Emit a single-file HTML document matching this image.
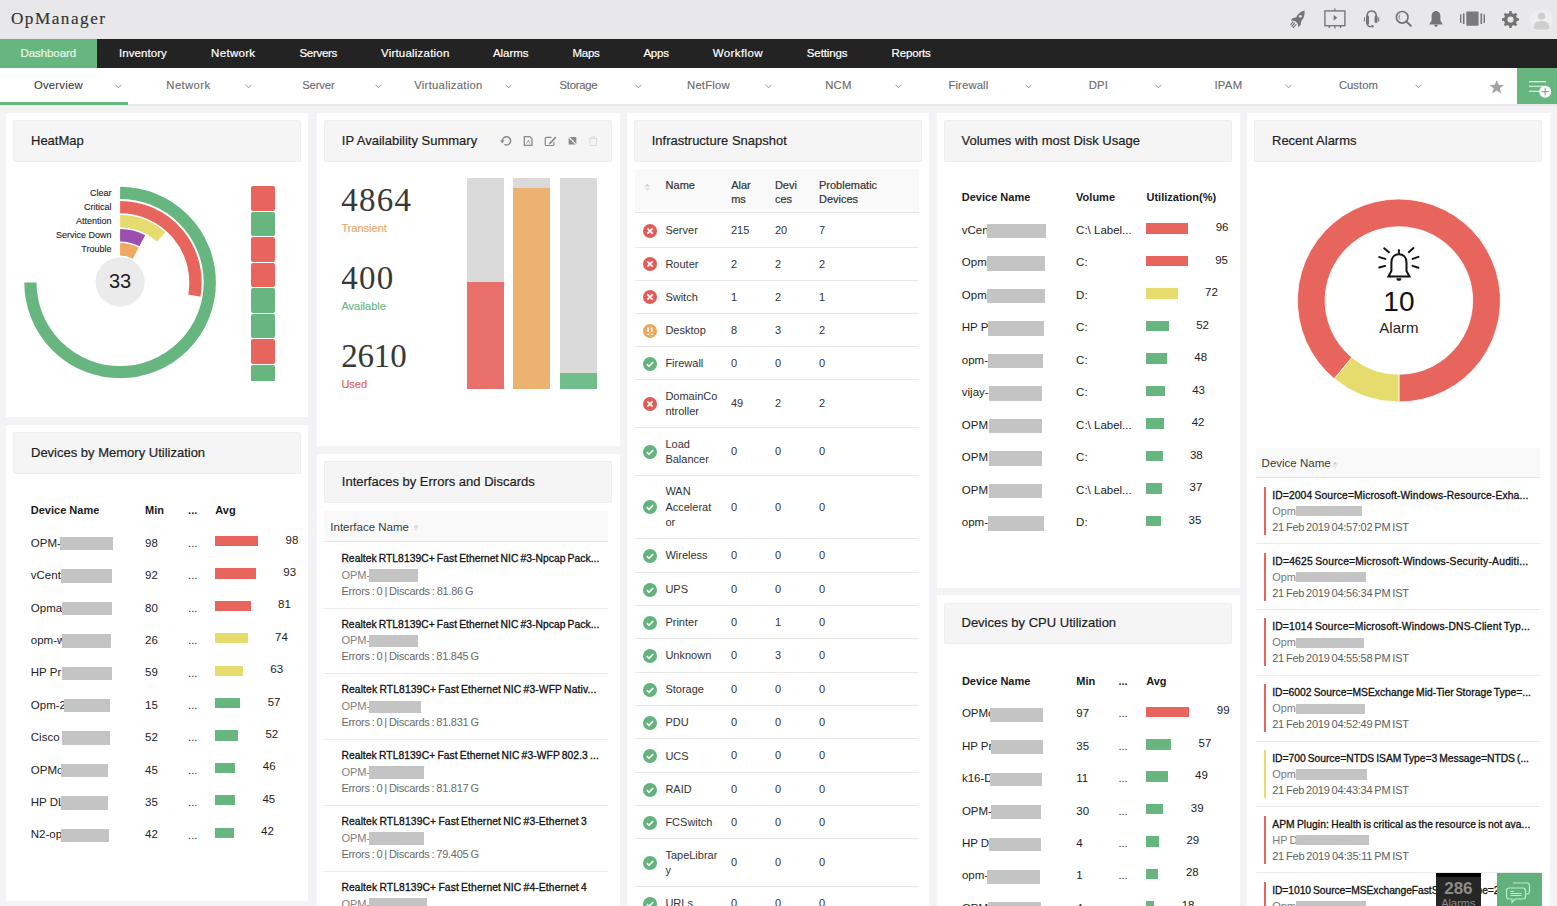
<!DOCTYPE html><html><head><meta charset="utf-8"><style>
html,body{margin:0;padding:0;}
body{width:1557px;height:906px;overflow:hidden;position:relative;background:#f3f3f5;font-family:"Liberation Sans", sans-serif;}
.t{position:absolute;white-space:nowrap;}
.r{position:absolute;}
svg{position:absolute;overflow:visible;}
</style></head><body>
<div class="r" style="left:0.00px;top:0.00px;width:1557.00px;height:39.00px;background:#e8e8ea;"></div>
<div class="t" style="top:7.50px;font-size:17.2px;line-height:22px;color:#333;font-family:'Liberation Serif', serif;-webkit-text-stroke:0.15px #333;left:10.90px;letter-spacing:1.512px;">OpManager</div>
<svg style="left:1286px;top:6px" width="22" height="24" viewBox="0 0 22 24">
<path d="M18.6 4.5 C15 5.2 12 7.8 10.2 11.2 L6.6 12.2 L4.8 14.3 L9 14.9 L11.7 17.6 L12.5 21.2 L14.6 19.1 L15.3 15.1 C17.9 12.8 18.9 9 18.6 4.5 Z" fill="#747474"/>
<circle cx="14.3" cy="10.3" r="1.35" fill="#e8e8ea"/>
<path d="M8.4 17.1 L5.9 20.3 M10 18.5 L7.3 21.6 M7 15.9 L4.8 18.6" stroke="#747474" stroke-width="1.1" stroke-linecap="round"/>
</svg>
<svg style="left:1323px;top:8px" width="24" height="22" viewBox="0 0 24 22">
<rect x="1.9" y="2.9" width="20" height="14.8" fill="none" stroke="#747474" stroke-width="1.35"/>
<path d="M11.9 0.6 V2.6 M11.9 17.7 V20.6 M6.6 17.8 L6 20 M17.2 17.8 L17.8 20" stroke="#747474" stroke-width="1.3"/>
<path d="M10.7 7 L14.3 9.8 L10.7 12.6 Z" fill="#747474"/>
</svg>
<svg style="left:1362px;top:9px" width="20" height="20" viewBox="0 0 20 20">
<path d="M5 13 V7.2 C5 3.6 7.3 1.9 9.7 1.9 C12.1 1.9 14.3 3.6 14.3 7.2 V12" fill="none" stroke="#747474" stroke-width="1.5"/>
<rect x="4" y="6.6" width="3" height="9.2" rx="1.3" fill="#747474"/>
<rect x="12.6" y="6.6" width="2.9" height="7.4" rx="1.3" fill="#747474"/>
<rect x="1.9" y="8.2" width="1.1" height="4.3" rx="0.5" fill="#747474"/>
<rect x="16.2" y="8.2" width="1.1" height="4.3" rx="0.5" fill="#747474"/>
<path d="M5.4 15.3 C5.8 17.4 7.6 17.8 10 17.4" fill="none" stroke="#747474" stroke-width="1.3"/>
<circle cx="10.4" cy="17.2" r="1.2" fill="#747474"/>
</svg>
<svg style="left:1395px;top:10px" width="18" height="18" viewBox="0 0 18 18">
<circle cx="7.2" cy="7.3" r="5.8" fill="none" stroke="#747474" stroke-width="1.7"/>
<path d="M11.4 11.5 L15.8 15.9" stroke="#747474" stroke-width="2" stroke-linecap="round"/>
<path d="M5 4.5 C3.8 5.7 3.8 8.3 5 9.7" fill="none" stroke="#747474" stroke-width="0.9"/>
</svg>
<svg style="left:1428px;top:10px" width="16" height="18" viewBox="0 0 16 18">
<path d="M8 1 C5.2 1 3.6 3.4 3.6 6.4 V10.4 L1.2 14.4 H14.8 L12.4 10.4 V6.4 C12.4 3.4 10.8 1 8 1 Z" fill="#747474"/>
<ellipse cx="8" cy="15.6" rx="1.6" ry="1.2" fill="#747474"/>
</svg>
<svg style="left:1460px;top:11px" width="26" height="16" viewBox="0 0 26 16">
<rect x="6.3" y="0.5" width="12.3" height="14.3" rx="1" fill="#7b7b7f"/>
<rect x="0" y="3.4" width="1.4" height="8.6" fill="#747474"/>
<rect x="2.9" y="2.4" width="1.6" height="10.6" fill="#747474"/>
<rect x="20.5" y="2.4" width="1.6" height="10.6" fill="#747474"/>
<rect x="23.6" y="3.4" width="1.4" height="8.6" fill="#747474"/>
</svg>
<svg style="left:1501.8px;top:10.6px" width="17" height="17" viewBox="0 0 16.4 16.4">
<path d="M6.83 2.05 L7.06 0.08 L9.34 0.08 L9.57 2.05 L10.61 2.38 L11.58 2.88 L13.13 1.65 L14.75 3.27 L13.52 4.82 L14.02 5.79 L14.35 6.83 L16.32 7.06 L16.32 9.34 L14.35 9.57 L14.02 10.61 L13.52 11.58 L14.75 13.13 L13.13 14.75 L11.58 13.52 L10.61 14.02 L9.57 14.35 L9.34 16.32 L7.06 16.32 L6.83 14.35 L5.79 14.02 L4.82 13.52 L3.27 14.75 L1.65 13.13 L2.88 11.58 L2.38 10.61 L2.05 9.57 L0.08 9.34 L0.08 7.06 L2.05 6.83 L2.38 5.79 L2.88 4.82 L1.65 3.27 L3.27 1.65 L4.82 2.88 L5.79 2.38 Z M11.2 8.2 A3 3 0 1 0 5.2 8.2 A3 3 0 1 0 11.2 8.2 Z" fill="#747474" fill-rule="evenodd"/>
</svg>
<svg style="left:1530px;top:7.5px" width="23" height="24" viewBox="0 0 23 24">
<circle cx="11.5" cy="12" r="11.3" fill="#eeeeef"/>
<circle cx="11.6" cy="8.2" r="3.6" fill="#cfcfd0"/>
<path d="M3.6 19.5 C3.8 15 7 13 11.6 13 C16.2 13 19.4 15 19.6 19.5 C19.6 21 17 21.8 11.6 21.8 C6.2 21.8 3.6 21 3.6 19.5 Z" fill="#cfcfd0"/>
</svg>
<div class="r" style="left:0.00px;top:39.00px;width:1557.00px;height:29.00px;background:#232323;"></div>
<div class="r" style="left:0.00px;top:39.00px;width:97.00px;height:29.00px;background:#67b680;"></div>
<div class="t" style="top:46.42px;font-size:11.5px;line-height:14px;color:#e6f6ea;-webkit-text-stroke:0.2px #e6f6ea;left:20.50px;letter-spacing:-0.085px;">Dashboard</div>
<div class="t" style="top:46.42px;font-size:11.5px;line-height:14px;color:#ffffff;-webkit-text-stroke:0.2px #ffffff;left:119.00px;letter-spacing:0.065px;">Inventory</div>
<div class="t" style="top:46.42px;font-size:11.5px;line-height:14px;color:#ffffff;-webkit-text-stroke:0.2px #ffffff;left:211.10px;letter-spacing:0.302px;">Network</div>
<div class="t" style="top:46.42px;font-size:11.5px;line-height:14px;color:#ffffff;-webkit-text-stroke:0.2px #ffffff;left:299.40px;letter-spacing:-0.289px;">Servers</div>
<div class="t" style="top:46.42px;font-size:11.5px;line-height:14px;color:#ffffff;-webkit-text-stroke:0.2px #ffffff;left:381.00px;letter-spacing:0.204px;">Virtualization</div>
<div class="t" style="top:46.42px;font-size:11.5px;line-height:14px;color:#ffffff;-webkit-text-stroke:0.2px #ffffff;left:493.00px;letter-spacing:-0.064px;">Alarms</div>
<div class="t" style="top:46.42px;font-size:11.5px;line-height:14px;color:#ffffff;-webkit-text-stroke:0.2px #ffffff;left:572.50px;letter-spacing:-0.256px;">Maps</div>
<div class="t" style="top:46.42px;font-size:11.5px;line-height:14px;color:#ffffff;-webkit-text-stroke:0.2px #ffffff;left:643.40px;letter-spacing:-0.230px;">Apps</div>
<div class="t" style="top:46.42px;font-size:11.5px;line-height:14px;color:#ffffff;-webkit-text-stroke:0.2px #ffffff;left:712.70px;letter-spacing:0.403px;">Workflow</div>
<div class="t" style="top:46.42px;font-size:11.5px;line-height:14px;color:#ffffff;-webkit-text-stroke:0.2px #ffffff;left:806.80px;letter-spacing:-0.108px;">Settings</div>
<div class="t" style="top:46.42px;font-size:11.5px;line-height:14px;color:#ffffff;-webkit-text-stroke:0.2px #ffffff;left:891.50px;letter-spacing:-0.154px;">Reports</div>
<div class="r" style="left:0.00px;top:68.00px;width:1557.00px;height:36.00px;background:#ffffff;"></div>
<div class="r" style="left:0.00px;top:104.00px;width:1557.00px;height:2.30px;background:#e7e7ea;"></div>
<div class="r" style="left:0.00px;top:102.00px;width:128.00px;height:2.80px;background:#67b680;"></div>
<div class="t" style="top:77.98px;font-size:11.3px;line-height:14px;color:#3d3d3d;-webkit-text-stroke:0.12px #3d3d3d;left:58.40px;transform:translateX(-50%);letter-spacing:0.213px;">Overview</div>
<svg style="left:114.5px;top:84.3px" width="7" height="5" viewBox="0 0 7 5"><path d="M0.5 0.8 L3.5 3.8 L6.5 0.8" fill="none" stroke="#8a8a8a" stroke-width="0.9"/></svg>
<div class="t" style="top:77.98px;font-size:11.3px;line-height:14px;color:#6a6a6a;-webkit-text-stroke:0.12px #6a6a6a;left:188.40px;transform:translateX(-50%);letter-spacing:0.380px;">Network</div>
<svg style="left:244.5px;top:84.3px" width="7" height="5" viewBox="0 0 7 5"><path d="M0.5 0.8 L3.5 3.8 L6.5 0.8" fill="none" stroke="#8a8a8a" stroke-width="0.9"/></svg>
<div class="t" style="top:77.98px;font-size:11.3px;line-height:14px;color:#6a6a6a;-webkit-text-stroke:0.12px #6a6a6a;left:318.40px;transform:translateX(-50%);letter-spacing:-0.147px;">Server</div>
<svg style="left:374.5px;top:84.3px" width="7" height="5" viewBox="0 0 7 5"><path d="M0.5 0.8 L3.5 3.8 L6.5 0.8" fill="none" stroke="#8a8a8a" stroke-width="0.9"/></svg>
<div class="t" style="top:77.98px;font-size:11.3px;line-height:14px;color:#6a6a6a;-webkit-text-stroke:0.12px #6a6a6a;left:448.40px;transform:translateX(-50%);letter-spacing:0.280px;">Virtualization</div>
<svg style="left:504.5px;top:84.3px" width="7" height="5" viewBox="0 0 7 5"><path d="M0.5 0.8 L3.5 3.8 L6.5 0.8" fill="none" stroke="#8a8a8a" stroke-width="0.9"/></svg>
<div class="t" style="top:77.98px;font-size:11.3px;line-height:14px;color:#6a6a6a;-webkit-text-stroke:0.12px #6a6a6a;left:578.40px;transform:translateX(-50%);letter-spacing:-0.240px;">Storage</div>
<svg style="left:634.5px;top:84.3px" width="7" height="5" viewBox="0 0 7 5"><path d="M0.5 0.8 L3.5 3.8 L6.5 0.8" fill="none" stroke="#8a8a8a" stroke-width="0.9"/></svg>
<div class="t" style="top:77.98px;font-size:11.3px;line-height:14px;color:#6a6a6a;-webkit-text-stroke:0.12px #6a6a6a;left:708.40px;transform:translateX(-50%);letter-spacing:0.180px;">NetFlow</div>
<svg style="left:764.5px;top:84.3px" width="7" height="5" viewBox="0 0 7 5"><path d="M0.5 0.8 L3.5 3.8 L6.5 0.8" fill="none" stroke="#8a8a8a" stroke-width="0.9"/></svg>
<div class="t" style="top:77.98px;font-size:11.3px;line-height:14px;color:#6a6a6a;-webkit-text-stroke:0.12px #6a6a6a;left:838.40px;transform:translateX(-50%);letter-spacing:0.189px;">NCM</div>
<svg style="left:894.5px;top:84.3px" width="7" height="5" viewBox="0 0 7 5"><path d="M0.5 0.8 L3.5 3.8 L6.5 0.8" fill="none" stroke="#8a8a8a" stroke-width="0.9"/></svg>
<div class="t" style="top:77.98px;font-size:11.3px;line-height:14px;color:#6a6a6a;-webkit-text-stroke:0.12px #6a6a6a;left:968.40px;transform:translateX(-50%);letter-spacing:0.135px;">Firewall</div>
<svg style="left:1024.5px;top:84.3px" width="7" height="5" viewBox="0 0 7 5"><path d="M0.5 0.8 L3.5 3.8 L6.5 0.8" fill="none" stroke="#8a8a8a" stroke-width="0.9"/></svg>
<div class="t" style="top:77.98px;font-size:11.3px;line-height:14px;color:#6a6a6a;-webkit-text-stroke:0.12px #6a6a6a;left:1098.40px;transform:translateX(-50%);letter-spacing:0.152px;">DPI</div>
<svg style="left:1154.5px;top:84.3px" width="7" height="5" viewBox="0 0 7 5"><path d="M0.5 0.8 L3.5 3.8 L6.5 0.8" fill="none" stroke="#8a8a8a" stroke-width="0.9"/></svg>
<div class="t" style="top:77.98px;font-size:11.3px;line-height:14px;color:#6a6a6a;-webkit-text-stroke:0.12px #6a6a6a;left:1228.40px;transform:translateX(-50%);letter-spacing:0.280px;">IPAM</div>
<svg style="left:1284.5px;top:84.3px" width="7" height="5" viewBox="0 0 7 5"><path d="M0.5 0.8 L3.5 3.8 L6.5 0.8" fill="none" stroke="#8a8a8a" stroke-width="0.9"/></svg>
<div class="t" style="top:77.98px;font-size:11.3px;line-height:14px;color:#6a6a6a;-webkit-text-stroke:0.12px #6a6a6a;left:1358.40px;transform:translateX(-50%);letter-spacing:0.013px;">Custom</div>
<svg style="left:1414.5px;top:84.3px" width="7" height="5" viewBox="0 0 7 5"><path d="M0.5 0.8 L3.5 3.8 L6.5 0.8" fill="none" stroke="#8a8a8a" stroke-width="0.9"/></svg>
<svg style="left:1488.9px;top:78.6px" width="15.5" height="15.5" viewBox="0 0 24 24"><path d="M12 1.5 L15 9 L23 9.3 L16.8 14.4 L19 22.3 L12 17.8 L5 22.3 L7.2 14.4 L1 9.3 L9 9 Z" fill="#a3a3a3"/></svg>
<div class="r" style="left:1517.40px;top:68.00px;width:39.60px;height:35.80px;background:#67b680;"></div>
<svg style="left:1527px;top:76px" width="26" height="24" viewBox="0 0 26 24">
<path d="M2 5.6 H19 M2 10.2 H19 M2 15.2 H12" stroke="#e9f7ee" stroke-width="1.1"/>
<circle cx="18.2" cy="15.7" r="6" fill="#fff"/>
<path d="M18.2 12 V19.4 M14.5 15.7 H21.9" stroke="#6f9f80" stroke-width="1"/>
</svg>
<div class="r" style="left:6.00px;top:112.80px;width:302.30px;height:304.70px;background:#ffffff;"></div>
<div class="r" style="left:13.20px;top:120.00px;width:287.70px;height:41.8px;background:#f5f5f5;border:1px solid #eeeeee;box-sizing:border-box;border-radius:2px;"></div>
<div class="t" style="top:132.70px;font-size:13px;line-height:16px;color:#1e1e1e;-webkit-text-stroke:0.2px #1e1e1e;left:31.00px;">HeatMap</div>
<svg style="left:0;top:0" width="1557" height="906"><path d="M120.10 192.80 A89.7 89.7 0 1 1 30.40 282.50" fill="none" stroke="#67b680" stroke-width="12.2"/><path d="M120.10 207.10 A75.4 75.4 0 0 1 194.35 295.59" fill="none" stroke="#e8655d" stroke-width="12.4"/><path d="M120.10 221.15 A61.35 61.35 0 0 1 161.15 236.91" fill="none" stroke="#e6dc6e" stroke-width="12.5"/><path d="M120.10 235.25 A47.25 47.25 0 0 1 142.28 240.78" fill="none" stroke="#9c4fae" stroke-width="12.5"/><path d="M120.10 249.25 A33.25 33.25 0 0 1 135.71 253.14" fill="none" stroke="#f0a862" stroke-width="12.7"/><circle cx="120.1" cy="281.8" r="24.6" fill="#ebebeb"/></svg>
<div class="t" style="top:269.37px;font-size:20px;line-height:25px;color:#1f1f1f;left:120.10px;transform:translateX(-50%);">33</div>
<div class="t" style="top:188.18px;font-size:9px;line-height:11px;color:#222;-webkit-text-stroke:0.1px #222;right:1445.50px;">Clear</div>
<div class="t" style="top:202.08px;font-size:9px;line-height:11px;color:#222;-webkit-text-stroke:0.1px #222;right:1445.50px;">Critical</div>
<div class="t" style="top:215.98px;font-size:9px;line-height:11px;color:#222;-webkit-text-stroke:0.1px #222;right:1445.50px;">Attention</div>
<div class="t" style="top:229.88px;font-size:9px;line-height:11px;color:#222;-webkit-text-stroke:0.1px #222;right:1445.50px;">Service Down</div>
<div class="t" style="top:243.78px;font-size:9px;line-height:11px;color:#222;-webkit-text-stroke:0.1px #222;right:1445.50px;">Trouble</div>
<div class="r" style="left:250.70px;top:186.40px;width:24.30px;height:24.30px;background:#e8655d;border-radius:2px;"></div>
<div class="r" style="left:250.70px;top:211.90px;width:24.30px;height:24.30px;background:#67b680;border-radius:2px;"></div>
<div class="r" style="left:250.70px;top:237.40px;width:24.30px;height:24.30px;background:#e8655d;border-radius:2px;"></div>
<div class="r" style="left:250.70px;top:262.90px;width:24.30px;height:24.30px;background:#e8655d;border-radius:2px;"></div>
<div class="r" style="left:250.70px;top:288.40px;width:24.30px;height:24.30px;background:#67b680;border-radius:2px;"></div>
<div class="r" style="left:250.70px;top:313.90px;width:24.30px;height:24.30px;background:#67b680;border-radius:2px;"></div>
<div class="r" style="left:250.70px;top:339.40px;width:24.30px;height:24.30px;background:#e8655d;border-radius:2px;"></div>
<div class="r" style="left:250.70px;top:364.90px;width:24.30px;height:16.10px;background:#67b680;border-radius:2px 2px 0 0;"></div>
<div class="r" style="left:6.00px;top:424.70px;width:302.30px;height:476.00px;background:#ffffff;"></div>
<div class="r" style="left:13.20px;top:431.90px;width:287.70px;height:41.8px;background:#f5f5f5;border:1px solid #eeeeee;box-sizing:border-box;border-radius:2px;"></div>
<div class="t" style="top:444.60px;font-size:13px;line-height:16px;color:#1e1e1e;-webkit-text-stroke:0.2px #1e1e1e;left:31.00px;">Devices by Memory Utilization</div>
<div class="t" style="top:503.19px;font-size:11px;line-height:14px;color:#1a1a1a;font-weight:700;left:30.80px;">Device Name</div>
<div class="t" style="top:503.19px;font-size:11px;line-height:14px;color:#1a1a1a;font-weight:700;left:145.10px;">Min</div>
<div class="t" style="top:503.19px;font-size:11px;line-height:14px;color:#1a1a1a;font-weight:700;left:188.10px;">...</div>
<div class="t" style="top:503.19px;font-size:11px;line-height:14px;color:#1a1a1a;font-weight:700;left:215.30px;">Avg</div>
<div class="t" style="top:535.82px;font-size:11.5px;line-height:14px;color:#222;left:30.80px;">OPM-</div>
<div class="r" style="left:59.90px;top:537.00px;width:53.20px;height:13.40px;background:#c4c4c4;"></div>
<div class="t" style="top:535.82px;font-size:11.5px;line-height:14px;color:#222;left:145.10px;">98</div>
<div class="t" style="top:535.99px;font-size:11px;line-height:14px;color:#222;left:188.10px;">...</div>
<div class="r" style="left:215.30px;top:535.90px;width:42.73px;height:10.40px;background:#e8655d;"></div>
<div class="t" style="top:532.62px;font-size:11.5px;line-height:14px;color:#222;left:285.53px;">98</div>
<div class="t" style="top:568.22px;font-size:11.5px;line-height:14px;color:#222;left:30.80px;">vCent</div>
<div class="r" style="left:60.50px;top:569.40px;width:51.90px;height:13.40px;background:#c4c4c4;"></div>
<div class="t" style="top:568.22px;font-size:11.5px;line-height:14px;color:#222;left:145.10px;">92</div>
<div class="t" style="top:568.39px;font-size:11px;line-height:14px;color:#222;left:188.10px;">...</div>
<div class="r" style="left:215.30px;top:568.30px;width:40.55px;height:10.40px;background:#e8655d;"></div>
<div class="t" style="top:565.02px;font-size:11.5px;line-height:14px;color:#222;left:283.35px;">93</div>
<div class="t" style="top:600.62px;font-size:11.5px;line-height:14px;color:#222;left:30.80px;">Opma</div>
<div class="r" style="left:61.90px;top:601.80px;width:50.00px;height:13.40px;background:#c4c4c4;"></div>
<div class="t" style="top:600.62px;font-size:11.5px;line-height:14px;color:#222;left:145.10px;">80</div>
<div class="t" style="top:600.79px;font-size:11px;line-height:14px;color:#222;left:188.10px;">...</div>
<div class="r" style="left:215.30px;top:600.70px;width:35.32px;height:10.40px;background:#e8655d;"></div>
<div class="t" style="top:597.42px;font-size:11.5px;line-height:14px;color:#222;left:278.12px;">81</div>
<div class="t" style="top:633.02px;font-size:11.5px;line-height:14px;color:#222;left:30.80px;">opm-w</div>
<div class="r" style="left:61.90px;top:634.20px;width:49.00px;height:13.40px;background:#c4c4c4;"></div>
<div class="t" style="top:633.02px;font-size:11.5px;line-height:14px;color:#222;left:145.10px;">26</div>
<div class="t" style="top:633.19px;font-size:11px;line-height:14px;color:#222;left:188.10px;">...</div>
<div class="r" style="left:215.30px;top:633.10px;width:32.26px;height:10.40px;background:#e6dc6e;"></div>
<div class="t" style="top:629.82px;font-size:11.5px;line-height:14px;color:#222;left:275.06px;">74</div>
<div class="t" style="top:665.42px;font-size:11.5px;line-height:14px;color:#222;left:30.80px;">HP Pr</div>
<div class="r" style="left:61.90px;top:666.60px;width:50.00px;height:13.40px;background:#c4c4c4;"></div>
<div class="t" style="top:665.42px;font-size:11.5px;line-height:14px;color:#222;left:145.10px;">59</div>
<div class="t" style="top:665.59px;font-size:11px;line-height:14px;color:#222;left:188.10px;">...</div>
<div class="r" style="left:215.30px;top:665.50px;width:27.47px;height:10.40px;background:#e6dc6e;"></div>
<div class="t" style="top:662.22px;font-size:11.5px;line-height:14px;color:#222;left:270.27px;">63</div>
<div class="t" style="top:697.82px;font-size:11.5px;line-height:14px;color:#222;left:30.80px;">Opm-2</div>
<div class="r" style="left:63.90px;top:699.00px;width:46.30px;height:13.40px;background:#c4c4c4;"></div>
<div class="t" style="top:697.82px;font-size:11.5px;line-height:14px;color:#222;left:145.10px;">15</div>
<div class="t" style="top:697.99px;font-size:11px;line-height:14px;color:#222;left:188.10px;">...</div>
<div class="r" style="left:215.30px;top:697.90px;width:24.85px;height:10.40px;background:#67b680;"></div>
<div class="t" style="top:694.62px;font-size:11.5px;line-height:14px;color:#222;left:267.65px;">57</div>
<div class="t" style="top:730.22px;font-size:11.5px;line-height:14px;color:#222;left:30.80px;">Cisco 2</div>
<div class="r" style="left:62.00px;top:731.40px;width:47.50px;height:13.40px;background:#c4c4c4;"></div>
<div class="t" style="top:730.22px;font-size:11.5px;line-height:14px;color:#222;left:145.10px;">52</div>
<div class="t" style="top:730.39px;font-size:11px;line-height:14px;color:#222;left:188.10px;">...</div>
<div class="r" style="left:215.30px;top:730.30px;width:22.67px;height:10.40px;background:#67b680;"></div>
<div class="t" style="top:727.02px;font-size:11.5px;line-height:14px;color:#222;left:265.47px;">52</div>
<div class="t" style="top:762.62px;font-size:11.5px;line-height:14px;color:#222;left:30.80px;">OPMc</div>
<div class="r" style="left:61.40px;top:763.80px;width:46.80px;height:13.40px;background:#c4c4c4;"></div>
<div class="t" style="top:762.62px;font-size:11.5px;line-height:14px;color:#222;left:145.10px;">45</div>
<div class="t" style="top:762.79px;font-size:11px;line-height:14px;color:#222;left:188.10px;">...</div>
<div class="r" style="left:215.30px;top:762.70px;width:20.06px;height:10.40px;background:#67b680;"></div>
<div class="t" style="top:759.42px;font-size:11.5px;line-height:14px;color:#222;left:262.86px;">46</div>
<div class="t" style="top:795.02px;font-size:11.5px;line-height:14px;color:#222;left:30.80px;">HP DL</div>
<div class="r" style="left:61.40px;top:796.20px;width:46.30px;height:13.40px;background:#c4c4c4;"></div>
<div class="t" style="top:795.02px;font-size:11.5px;line-height:14px;color:#222;left:145.10px;">35</div>
<div class="t" style="top:795.19px;font-size:11px;line-height:14px;color:#222;left:188.10px;">...</div>
<div class="r" style="left:215.30px;top:795.10px;width:19.62px;height:10.40px;background:#67b680;"></div>
<div class="t" style="top:791.82px;font-size:11.5px;line-height:14px;color:#222;left:262.42px;">45</div>
<div class="t" style="top:827.42px;font-size:11.5px;line-height:14px;color:#222;left:30.80px;">N2-op</div>
<div class="r" style="left:61.40px;top:828.60px;width:47.60px;height:13.40px;background:#c4c4c4;"></div>
<div class="t" style="top:827.42px;font-size:11.5px;line-height:14px;color:#222;left:145.10px;">42</div>
<div class="t" style="top:827.59px;font-size:11px;line-height:14px;color:#222;left:188.10px;">...</div>
<div class="r" style="left:215.30px;top:827.50px;width:18.31px;height:10.40px;background:#67b680;"></div>
<div class="t" style="top:824.22px;font-size:11.5px;line-height:14px;color:#222;left:261.11px;">42</div>
<div class="r" style="left:316.80px;top:112.80px;width:302.80px;height:333.10px;background:#ffffff;"></div>
<div class="r" style="left:324.00px;top:120.00px;width:288.20px;height:41.8px;background:#f5f5f5;border:1px solid #eeeeee;box-sizing:border-box;border-radius:2px;"></div>
<div class="t" style="top:132.70px;font-size:13px;line-height:16px;color:#1e1e1e;-webkit-text-stroke:0.2px #1e1e1e;left:341.80px;">IP Availability Summary</div>
<svg style="left:499px;top:134.5px" width="100" height="12" viewBox="0 0 100 12">
<path d="M3.4 5.9 A4.1 4.1 0 1 1 5.45 9.35" fill="none" stroke="#8a8a8a" stroke-width="1.5"/>
<path d="M1.1 5.5 L5.6 5.5 L3.3 8.6 Z" fill="#8a8a8a"/>
<path d="M25.3 1.6 H30.8 L33 3.8 V10.3 H25.3 Z" fill="none" stroke="#8a8a8a" stroke-width="1.3"/>
<path d="M27.5 8.5 L29.5 5 L30.8 8.5" fill="none" stroke="#8a8a8a" stroke-width="0.8"/>
<path d="M52.5 2.3 H47.3 C46.5 2.3 46.2 2.6 46.2 3.4 V9.4 C46.2 10.2 46.5 10.5 47.3 10.5 H53.8 C54.6 10.5 54.9 10.2 54.9 9.4 V7" fill="none" stroke="#8a8a8a" stroke-width="1.2"/>
<path d="M50.4 7.8 L56.2 1.6 L57.4 2.8 L51.5 9 L49.8 9.4 Z" fill="#8a8a8a"/>
<path d="M70 2 H77.3 V9.2 Z" fill="#8a8a8a"/>
<path d="M69.6 2.4 V9.6 H76.9 Z" fill="#8a8a8a"/>
<path d="M70.4 2.6 L76.6 8.8" stroke="#f4f4f4" stroke-width="1.1"/>
<path d="M90 3.5 H98.5 M92.5 3.5 V2 H96 V3.5 M91 4 V10.5 H97.5 V4" fill="none" stroke="#dddddd" stroke-width="1.1"/>
</svg>
<div class="t" style="top:180.36px;font-size:33px;line-height:41px;color:#383838;font-family:'Liberation Serif', serif;left:341.20px;letter-spacing:1.250px;">4864</div>
<div class="t" style="top:220.69px;font-size:11px;line-height:14px;color:#eaa96b;-webkit-text-stroke:0.2px #eaa96b;left:341.40px;">Transient</div>
<div class="t" style="top:257.76px;font-size:33px;line-height:41px;color:#383838;font-family:'Liberation Serif', serif;left:341.20px;letter-spacing:1.267px;">400</div>
<div class="t" style="top:298.69px;font-size:11px;line-height:14px;color:#6db889;-webkit-text-stroke:0.2px #6db889;left:341.40px;">Available</div>
<div class="t" style="top:336.26px;font-size:33px;line-height:41px;color:#383838;font-family:'Liberation Serif', serif;left:341.20px;letter-spacing:-0.175px;">2610</div>
<div class="t" style="top:376.79px;font-size:11px;line-height:14px;color:#e2655f;-webkit-text-stroke:0.2px #e2655f;left:341.40px;">Used</div>
<div class="r" style="left:467.30px;top:178.00px;width:36.60px;height:210.70px;background:#dadada;"></div>
<div class="r" style="left:467.30px;top:281.70px;width:36.60px;height:107.00px;background:#e8706b;"></div>
<div class="r" style="left:513.30px;top:178.00px;width:37.00px;height:210.70px;background:#dadada;"></div>
<div class="r" style="left:513.30px;top:187.80px;width:37.00px;height:200.90px;background:#ecb272;"></div>
<div class="r" style="left:559.70px;top:178.00px;width:37.10px;height:210.70px;background:#dadada;"></div>
<div class="r" style="left:559.70px;top:372.80px;width:37.10px;height:15.90px;background:#72bd8c;"></div>
<div class="r" style="left:316.80px;top:453.60px;width:302.80px;height:452.40px;background:#ffffff;"></div>
<div class="r" style="left:324.00px;top:460.80px;width:288.20px;height:41.8px;background:#f5f5f5;border:1px solid #eeeeee;box-sizing:border-box;border-radius:2px;"></div>
<div class="t" style="top:473.50px;font-size:13px;line-height:16px;color:#1e1e1e;-webkit-text-stroke:0.2px #1e1e1e;left:341.80px;">Interfaces by Errors and Discards</div>
<div class="r" style="left:324.40px;top:510.60px;width:284.10px;height:30.40px;background:#f9f9f9;border-bottom:1px solid #e6e6e6;"></div>
<div class="t" style="top:519.52px;font-size:11.5px;line-height:14px;color:#3a3a3a;left:330.30px;">Interface Name</div>
<svg style="left:413px;top:524px" width="6" height="8" viewBox="0 0 6 8"><path d="M0.5 3.5 L3 0.8 L5.5 3.5 Z" fill="#cfcfcf"/><path d="M0.5 4.5 L3 7.2 L5.5 4.5 Z" fill="#e6e6e6"/></svg>
<div class="t" style="top:551.73px;font-size:10.3px;line-height:13px;color:#111;word-spacing:-0.8px;-webkit-text-stroke:0.3px #111;left:341.40px;letter-spacing:0.044px;">Realtek RTL8139C+ Fast Ethernet NIC #3-Npcap Pack...</div>
<div class="t" style="top:567.59px;font-size:11px;line-height:14px;color:#808080;left:341.40px;">OPM-</div>
<div class="r" style="left:368.50px;top:569.00px;width:49.00px;height:12.70px;background:#c4c4c4;"></div>
<div class="t" style="top:583.69px;font-size:11px;line-height:14px;color:#6a6a6a;word-spacing:-0.8px;left:341.40px;letter-spacing:-0.255px;">Errors : 0 | Discards : 81.86 G</div>
<div class="r" style="left:324.40px;top:607.50px;width:284.10px;height:1.00px;background:#e9e9e9;"></div>
<div class="t" style="top:617.53px;font-size:10.3px;line-height:13px;color:#111;word-spacing:-0.8px;-webkit-text-stroke:0.3px #111;left:341.40px;letter-spacing:0.044px;">Realtek RTL8139C+ Fast Ethernet NIC #3-Npcap Pack...</div>
<div class="t" style="top:633.39px;font-size:11px;line-height:14px;color:#808080;left:341.40px;">OPM-</div>
<div class="r" style="left:368.50px;top:634.80px;width:49.70px;height:12.70px;background:#c4c4c4;"></div>
<div class="t" style="top:649.49px;font-size:11px;line-height:14px;color:#6a6a6a;word-spacing:-0.8px;left:341.40px;letter-spacing:-0.266px;">Errors : 0 | Discards : 81.845 G</div>
<div class="r" style="left:324.40px;top:673.30px;width:284.10px;height:1.00px;background:#e9e9e9;"></div>
<div class="t" style="top:683.33px;font-size:10.3px;line-height:13px;color:#111;word-spacing:-0.8px;-webkit-text-stroke:0.3px #111;left:341.40px;letter-spacing:0.129px;">Realtek RTL8139C+ Fast Ethernet NIC #3-WFP Nativ...</div>
<div class="t" style="top:699.19px;font-size:11px;line-height:14px;color:#808080;left:341.40px;">OPM-</div>
<div class="r" style="left:368.50px;top:700.60px;width:52.20px;height:12.70px;background:#c4c4c4;"></div>
<div class="t" style="top:715.29px;font-size:11px;line-height:14px;color:#6a6a6a;word-spacing:-0.8px;left:341.40px;letter-spacing:-0.266px;">Errors : 0 | Discards : 81.831 G</div>
<div class="r" style="left:324.40px;top:739.10px;width:284.10px;height:1.00px;background:#e9e9e9;"></div>
<div class="t" style="top:749.13px;font-size:10.3px;line-height:13px;color:#111;word-spacing:-0.8px;-webkit-text-stroke:0.3px #111;left:341.40px;letter-spacing:0.075px;">Realtek RTL8139C+ Fast Ethernet NIC #3-WFP 802.3 ...</div>
<div class="t" style="top:764.99px;font-size:11px;line-height:14px;color:#808080;left:341.40px;">OPM-</div>
<div class="r" style="left:368.50px;top:766.40px;width:55.20px;height:12.70px;background:#c4c4c4;"></div>
<div class="t" style="top:781.09px;font-size:11px;line-height:14px;color:#6a6a6a;word-spacing:-0.8px;left:341.40px;letter-spacing:-0.266px;">Errors : 0 | Discards : 81.817 G</div>
<div class="r" style="left:324.40px;top:804.90px;width:284.10px;height:1.00px;background:#e9e9e9;"></div>
<div class="t" style="top:814.93px;font-size:10.3px;line-height:13px;color:#111;word-spacing:-0.8px;-webkit-text-stroke:0.3px #111;left:341.40px;letter-spacing:0.130px;">Realtek RTL8139C+ Fast Ethernet NIC #3-Ethernet 3</div>
<div class="t" style="top:830.79px;font-size:11px;line-height:14px;color:#808080;left:341.40px;">OPM-</div>
<div class="r" style="left:368.50px;top:832.20px;width:55.20px;height:12.70px;background:#c4c4c4;"></div>
<div class="t" style="top:846.89px;font-size:11px;line-height:14px;color:#6a6a6a;word-spacing:-0.8px;left:341.40px;letter-spacing:-0.266px;">Errors : 0 | Discards : 79.405 G</div>
<div class="r" style="left:324.40px;top:870.70px;width:284.10px;height:1.00px;background:#e9e9e9;"></div>
<div class="t" style="top:880.73px;font-size:10.3px;line-height:13px;color:#111;word-spacing:-0.8px;-webkit-text-stroke:0.3px #111;left:341.40px;letter-spacing:0.130px;">Realtek RTL8139C+ Fast Ethernet NIC #4-Ethernet 4</div>
<div class="t" style="top:896.59px;font-size:11px;line-height:14px;color:#808080;left:341.40px;">OPM-</div>
<div class="r" style="left:368.50px;top:898.00px;width:58.00px;height:12.70px;background:#c4c4c4;"></div>
<div class="t" style="top:912.69px;font-size:11px;line-height:14px;color:#6a6a6a;word-spacing:-0.8px;left:341.40px;letter-spacing:-0.315px;">Errors : 0 | Discards : 0 G</div>
<div class="r" style="left:626.70px;top:112.80px;width:302.50px;height:793.20px;background:#ffffff;"></div>
<div class="r" style="left:633.90px;top:120.00px;width:287.90px;height:41.8px;background:#f5f5f5;border:1px solid #eeeeee;box-sizing:border-box;border-radius:2px;"></div>
<div class="t" style="top:132.70px;font-size:13px;line-height:16px;color:#1e1e1e;-webkit-text-stroke:0.2px #1e1e1e;left:651.70px;">Infrastructure Snapshot</div>
<div class="r" style="left:635.00px;top:169.40px;width:284.40px;height:44.00px;background:#f9f9f9;border-bottom:1px solid #e4e4e4;box-sizing:border-box;"></div>
<svg style="left:644px;top:183px" width="7" height="9" viewBox="0 0 7 9"><path d="M0.5 3.5 L3.3 0.8 L6.1 3.5 Z" fill="#cfcfcf"/><path d="M0.5 5 L3.3 7.8 L6.1 5 Z" fill="#e3e3e3"/></svg>
<div class="t" style="top:178.19px;font-size:11px;line-height:14px;color:#333;-webkit-text-stroke:0.2px #333;left:665.60px;">Name</div>
<div class="t" style="top:178.19px;font-size:11px;line-height:14px;color:#333;-webkit-text-stroke:0.2px #333;left:731.20px;">Alar</div>
<div class="t" style="top:192.19px;font-size:11px;line-height:14px;color:#333;-webkit-text-stroke:0.2px #333;left:731.20px;">ms</div>
<div class="t" style="top:178.19px;font-size:11px;line-height:14px;color:#333;-webkit-text-stroke:0.2px #333;left:774.90px;">Devi</div>
<div class="t" style="top:192.19px;font-size:11px;line-height:14px;color:#333;-webkit-text-stroke:0.2px #333;left:774.90px;">ces</div>
<div class="t" style="top:178.19px;font-size:11px;line-height:14px;color:#333;-webkit-text-stroke:0.2px #333;left:819.00px;">Problematic</div>
<div class="t" style="top:192.19px;font-size:11px;line-height:14px;color:#333;-webkit-text-stroke:0.2px #333;left:819.00px;">Devices</div>
<div class="t" style="top:223.20px;font-size:11px;line-height:14px;color:#333;left:665.40px;">Server</div>
<div class="t" style="top:223.09px;font-size:11px;line-height:14px;color:#333;left:731.00px;">215</div>
<div class="t" style="top:223.09px;font-size:11px;line-height:14px;color:#333;left:775.00px;">20</div>
<div class="t" style="top:223.09px;font-size:11px;line-height:14px;color:#333;left:819.00px;">7</div>
<svg style="left:643.1px;top:223.90px" width="14" height="14" viewBox="0 0 14 14"><circle cx="7" cy="7" r="7" fill="#e25b57"/><path d="M4.3 4.3 L9.7 9.7 M9.7 4.3 L4.3 9.7" stroke="#fff" stroke-width="1.7"/></svg>
<div class="r" style="left:635.00px;top:246.70px;width:284.40px;height:1.00px;background:#e8e8e8;"></div>
<div class="t" style="top:256.65px;font-size:11px;line-height:14px;color:#333;left:665.40px;">Router</div>
<div class="t" style="top:256.54px;font-size:11px;line-height:14px;color:#333;left:731.00px;">2</div>
<div class="t" style="top:256.54px;font-size:11px;line-height:14px;color:#333;left:775.00px;">2</div>
<div class="t" style="top:256.54px;font-size:11px;line-height:14px;color:#333;left:819.00px;">2</div>
<svg style="left:643.1px;top:257.35px" width="14" height="14" viewBox="0 0 14 14"><circle cx="7" cy="7" r="7" fill="#e25b57"/><path d="M4.3 4.3 L9.7 9.7 M9.7 4.3 L4.3 9.7" stroke="#fff" stroke-width="1.7"/></svg>
<div class="r" style="left:635.00px;top:279.80px;width:284.40px;height:1.00px;background:#e8e8e8;"></div>
<div class="t" style="top:289.75px;font-size:11px;line-height:14px;color:#333;left:665.40px;">Switch</div>
<div class="t" style="top:289.64px;font-size:11px;line-height:14px;color:#333;left:731.00px;">1</div>
<div class="t" style="top:289.64px;font-size:11px;line-height:14px;color:#333;left:775.00px;">2</div>
<div class="t" style="top:289.64px;font-size:11px;line-height:14px;color:#333;left:819.00px;">1</div>
<svg style="left:643.1px;top:290.45px" width="14" height="14" viewBox="0 0 14 14"><circle cx="7" cy="7" r="7" fill="#e25b57"/><path d="M4.3 4.3 L9.7 9.7 M9.7 4.3 L4.3 9.7" stroke="#fff" stroke-width="1.7"/></svg>
<div class="r" style="left:635.00px;top:312.90px;width:284.40px;height:1.00px;background:#e8e8e8;"></div>
<div class="t" style="top:322.85px;font-size:11px;line-height:14px;color:#333;left:665.40px;">Desktop</div>
<div class="t" style="top:322.74px;font-size:11px;line-height:14px;color:#333;left:731.00px;">8</div>
<div class="t" style="top:322.74px;font-size:11px;line-height:14px;color:#333;left:775.00px;">3</div>
<div class="t" style="top:322.74px;font-size:11px;line-height:14px;color:#333;left:819.00px;">2</div>
<svg style="left:643.1px;top:323.55px" width="14" height="14" viewBox="0 0 14 14"><circle cx="7" cy="7" r="7" fill="#eba85f"/><path d="M5.3 3.5 V8 M8.7 3.5 V8" stroke="#fff" stroke-width="1.6"/><circle cx="5.3" cy="10.3" r="0.9" fill="#fff"/><circle cx="8.7" cy="10.3" r="0.9" fill="#fff"/></svg>
<div class="r" style="left:635.00px;top:346.00px;width:284.40px;height:1.00px;background:#e8e8e8;"></div>
<div class="t" style="top:356.00px;font-size:11px;line-height:14px;color:#333;left:665.40px;">Firewall</div>
<div class="t" style="top:355.89px;font-size:11px;line-height:14px;color:#333;left:731.00px;">0</div>
<div class="t" style="top:355.89px;font-size:11px;line-height:14px;color:#333;left:775.00px;">0</div>
<div class="t" style="top:355.89px;font-size:11px;line-height:14px;color:#333;left:819.00px;">0</div>
<svg style="left:643.1px;top:356.70px" width="14" height="14" viewBox="0 0 14 14"><circle cx="7" cy="7" r="7" fill="#62b37c"/><path d="M3.8 7.2 L6 9.4 L10.2 5" fill="none" stroke="#fff" stroke-width="1.7"/></svg>
<div class="r" style="left:635.00px;top:379.20px;width:284.40px;height:1.00px;background:#e8e8e8;"></div>
<div class="t" style="top:388.80px;font-size:11px;line-height:14px;color:#333;left:665.40px;">DomainCo</div>
<div class="t" style="top:404.10px;font-size:11px;line-height:14px;color:#333;left:665.40px;">ntroller</div>
<div class="t" style="top:396.34px;font-size:11px;line-height:14px;color:#333;left:731.00px;">49</div>
<div class="t" style="top:396.34px;font-size:11px;line-height:14px;color:#333;left:775.00px;">2</div>
<div class="t" style="top:396.34px;font-size:11px;line-height:14px;color:#333;left:819.00px;">2</div>
<svg style="left:643.1px;top:397.15px" width="14" height="14" viewBox="0 0 14 14"><circle cx="7" cy="7" r="7" fill="#e25b57"/><path d="M4.3 4.3 L9.7 9.7 M9.7 4.3 L4.3 9.7" stroke="#fff" stroke-width="1.7"/></svg>
<div class="r" style="left:635.00px;top:426.90px;width:284.40px;height:1.00px;background:#e8e8e8;"></div>
<div class="t" style="top:436.75px;font-size:11px;line-height:14px;color:#333;left:665.40px;">Load</div>
<div class="t" style="top:452.05px;font-size:11px;line-height:14px;color:#333;left:665.40px;">Balancer</div>
<div class="t" style="top:444.29px;font-size:11px;line-height:14px;color:#333;left:731.00px;">0</div>
<div class="t" style="top:444.29px;font-size:11px;line-height:14px;color:#333;left:775.00px;">0</div>
<div class="t" style="top:444.29px;font-size:11px;line-height:14px;color:#333;left:819.00px;">0</div>
<svg style="left:643.1px;top:445.10px" width="14" height="14" viewBox="0 0 14 14"><circle cx="7" cy="7" r="7" fill="#62b37c"/><path d="M3.8 7.2 L6 9.4 L10.2 5" fill="none" stroke="#fff" stroke-width="1.7"/></svg>
<div class="r" style="left:635.00px;top:475.10px;width:284.40px;height:1.00px;background:#e8e8e8;"></div>
<div class="t" style="top:484.45px;font-size:11px;line-height:14px;color:#333;left:665.40px;">WAN</div>
<div class="t" style="top:499.75px;font-size:11px;line-height:14px;color:#333;left:665.40px;">Accelerat</div>
<div class="t" style="top:515.05px;font-size:11px;line-height:14px;color:#333;left:665.40px;">or</div>
<div class="t" style="top:499.64px;font-size:11px;line-height:14px;color:#333;left:731.00px;">0</div>
<div class="t" style="top:499.64px;font-size:11px;line-height:14px;color:#333;left:775.00px;">0</div>
<div class="t" style="top:499.64px;font-size:11px;line-height:14px;color:#333;left:819.00px;">0</div>
<svg style="left:643.1px;top:500.45px" width="14" height="14" viewBox="0 0 14 14"><circle cx="7" cy="7" r="7" fill="#62b37c"/><path d="M3.8 7.2 L6 9.4 L10.2 5" fill="none" stroke="#fff" stroke-width="1.7"/></svg>
<div class="r" style="left:635.00px;top:537.60px;width:284.40px;height:1.00px;background:#e8e8e8;"></div>
<div class="t" style="top:548.20px;font-size:11px;line-height:14px;color:#333;left:665.40px;">Wireless</div>
<div class="t" style="top:548.09px;font-size:11px;line-height:14px;color:#333;left:731.00px;">0</div>
<div class="t" style="top:548.09px;font-size:11px;line-height:14px;color:#333;left:775.00px;">0</div>
<div class="t" style="top:548.09px;font-size:11px;line-height:14px;color:#333;left:819.00px;">0</div>
<svg style="left:643.1px;top:548.90px" width="14" height="14" viewBox="0 0 14 14"><circle cx="7" cy="7" r="7" fill="#62b37c"/><path d="M3.8 7.2 L6 9.4 L10.2 5" fill="none" stroke="#fff" stroke-width="1.7"/></svg>
<div class="r" style="left:635.00px;top:572.00px;width:284.40px;height:1.00px;background:#e8e8e8;"></div>
<div class="t" style="top:581.90px;font-size:11px;line-height:14px;color:#333;left:665.40px;">UPS</div>
<div class="t" style="top:581.79px;font-size:11px;line-height:14px;color:#333;left:731.00px;">0</div>
<div class="t" style="top:581.79px;font-size:11px;line-height:14px;color:#333;left:775.00px;">0</div>
<div class="t" style="top:581.79px;font-size:11px;line-height:14px;color:#333;left:819.00px;">0</div>
<svg style="left:643.1px;top:582.60px" width="14" height="14" viewBox="0 0 14 14"><circle cx="7" cy="7" r="7" fill="#62b37c"/><path d="M3.8 7.2 L6 9.4 L10.2 5" fill="none" stroke="#fff" stroke-width="1.7"/></svg>
<div class="r" style="left:635.00px;top:605.00px;width:284.40px;height:1.00px;background:#e8e8e8;"></div>
<div class="t" style="top:615.00px;font-size:11px;line-height:14px;color:#333;left:665.40px;">Printer</div>
<div class="t" style="top:614.89px;font-size:11px;line-height:14px;color:#333;left:731.00px;">0</div>
<div class="t" style="top:614.89px;font-size:11px;line-height:14px;color:#333;left:775.00px;">1</div>
<div class="t" style="top:614.89px;font-size:11px;line-height:14px;color:#333;left:819.00px;">0</div>
<svg style="left:643.1px;top:615.70px" width="14" height="14" viewBox="0 0 14 14"><circle cx="7" cy="7" r="7" fill="#62b37c"/><path d="M3.8 7.2 L6 9.4 L10.2 5" fill="none" stroke="#fff" stroke-width="1.7"/></svg>
<div class="r" style="left:635.00px;top:638.20px;width:284.40px;height:1.00px;background:#e8e8e8;"></div>
<div class="t" style="top:648.40px;font-size:11px;line-height:14px;color:#333;left:665.40px;">Unknown</div>
<div class="t" style="top:648.29px;font-size:11px;line-height:14px;color:#333;left:731.00px;">0</div>
<div class="t" style="top:648.29px;font-size:11px;line-height:14px;color:#333;left:775.00px;">3</div>
<div class="t" style="top:648.29px;font-size:11px;line-height:14px;color:#333;left:819.00px;">0</div>
<svg style="left:643.1px;top:649.10px" width="14" height="14" viewBox="0 0 14 14"><circle cx="7" cy="7" r="7" fill="#62b37c"/><path d="M3.8 7.2 L6 9.4 L10.2 5" fill="none" stroke="#fff" stroke-width="1.7"/></svg>
<div class="r" style="left:635.00px;top:671.80px;width:284.40px;height:1.00px;background:#e8e8e8;"></div>
<div class="t" style="top:681.85px;font-size:11px;line-height:14px;color:#333;left:665.40px;">Storage</div>
<div class="t" style="top:681.74px;font-size:11px;line-height:14px;color:#333;left:731.00px;">0</div>
<div class="t" style="top:681.74px;font-size:11px;line-height:14px;color:#333;left:775.00px;">0</div>
<div class="t" style="top:681.74px;font-size:11px;line-height:14px;color:#333;left:819.00px;">0</div>
<svg style="left:643.1px;top:682.55px" width="14" height="14" viewBox="0 0 14 14"><circle cx="7" cy="7" r="7" fill="#62b37c"/><path d="M3.8 7.2 L6 9.4 L10.2 5" fill="none" stroke="#fff" stroke-width="1.7"/></svg>
<div class="r" style="left:635.00px;top:705.10px;width:284.40px;height:1.00px;background:#e8e8e8;"></div>
<div class="t" style="top:715.10px;font-size:11px;line-height:14px;color:#333;left:665.40px;">PDU</div>
<div class="t" style="top:714.99px;font-size:11px;line-height:14px;color:#333;left:731.00px;">0</div>
<div class="t" style="top:714.99px;font-size:11px;line-height:14px;color:#333;left:775.00px;">0</div>
<div class="t" style="top:714.99px;font-size:11px;line-height:14px;color:#333;left:819.00px;">0</div>
<svg style="left:643.1px;top:715.80px" width="14" height="14" viewBox="0 0 14 14"><circle cx="7" cy="7" r="7" fill="#62b37c"/><path d="M3.8 7.2 L6 9.4 L10.2 5" fill="none" stroke="#fff" stroke-width="1.7"/></svg>
<div class="r" style="left:635.00px;top:738.30px;width:284.40px;height:1.00px;background:#e8e8e8;"></div>
<div class="t" style="top:748.55px;font-size:11px;line-height:14px;color:#333;left:665.40px;">UCS</div>
<div class="t" style="top:748.44px;font-size:11px;line-height:14px;color:#333;left:731.00px;">0</div>
<div class="t" style="top:748.44px;font-size:11px;line-height:14px;color:#333;left:775.00px;">0</div>
<div class="t" style="top:748.44px;font-size:11px;line-height:14px;color:#333;left:819.00px;">0</div>
<svg style="left:643.1px;top:749.25px" width="14" height="14" viewBox="0 0 14 14"><circle cx="7" cy="7" r="7" fill="#62b37c"/><path d="M3.8 7.2 L6 9.4 L10.2 5" fill="none" stroke="#fff" stroke-width="1.7"/></svg>
<div class="r" style="left:635.00px;top:772.00px;width:284.40px;height:1.00px;background:#e8e8e8;"></div>
<div class="t" style="top:781.80px;font-size:11px;line-height:14px;color:#333;left:665.40px;">RAID</div>
<div class="t" style="top:781.69px;font-size:11px;line-height:14px;color:#333;left:731.00px;">0</div>
<div class="t" style="top:781.69px;font-size:11px;line-height:14px;color:#333;left:775.00px;">0</div>
<div class="t" style="top:781.69px;font-size:11px;line-height:14px;color:#333;left:819.00px;">0</div>
<svg style="left:643.1px;top:782.50px" width="14" height="14" viewBox="0 0 14 14"><circle cx="7" cy="7" r="7" fill="#62b37c"/><path d="M3.8 7.2 L6 9.4 L10.2 5" fill="none" stroke="#fff" stroke-width="1.7"/></svg>
<div class="r" style="left:635.00px;top:804.80px;width:284.40px;height:1.00px;background:#e8e8e8;"></div>
<div class="t" style="top:814.85px;font-size:11px;line-height:14px;color:#333;left:665.40px;">FCSwitch</div>
<div class="t" style="top:814.74px;font-size:11px;line-height:14px;color:#333;left:731.00px;">0</div>
<div class="t" style="top:814.74px;font-size:11px;line-height:14px;color:#333;left:775.00px;">0</div>
<div class="t" style="top:814.74px;font-size:11px;line-height:14px;color:#333;left:819.00px;">0</div>
<svg style="left:643.1px;top:815.55px" width="14" height="14" viewBox="0 0 14 14"><circle cx="7" cy="7" r="7" fill="#62b37c"/><path d="M3.8 7.2 L6 9.4 L10.2 5" fill="none" stroke="#fff" stroke-width="1.7"/></svg>
<div class="r" style="left:635.00px;top:838.10px;width:284.40px;height:1.00px;background:#e8e8e8;"></div>
<div class="t" style="top:847.90px;font-size:11px;line-height:14px;color:#333;left:665.40px;">TapeLibrar</div>
<div class="t" style="top:863.20px;font-size:11px;line-height:14px;color:#333;left:665.40px;">y</div>
<div class="t" style="top:855.44px;font-size:11px;line-height:14px;color:#333;left:731.00px;">0</div>
<div class="t" style="top:855.44px;font-size:11px;line-height:14px;color:#333;left:775.00px;">0</div>
<div class="t" style="top:855.44px;font-size:11px;line-height:14px;color:#333;left:819.00px;">0</div>
<svg style="left:643.1px;top:856.25px" width="14" height="14" viewBox="0 0 14 14"><circle cx="7" cy="7" r="7" fill="#62b37c"/><path d="M3.8 7.2 L6 9.4 L10.2 5" fill="none" stroke="#fff" stroke-width="1.7"/></svg>
<div class="r" style="left:635.00px;top:886.20px;width:284.40px;height:1.00px;background:#e8e8e8;"></div>
<div class="t" style="top:896.25px;font-size:11px;line-height:14px;color:#333;left:665.40px;">URLs</div>
<div class="t" style="top:896.14px;font-size:11px;line-height:14px;color:#333;left:731.00px;">0</div>
<div class="t" style="top:896.14px;font-size:11px;line-height:14px;color:#333;left:775.00px;">0</div>
<div class="t" style="top:896.14px;font-size:11px;line-height:14px;color:#333;left:819.00px;">0</div>
<svg style="left:643.1px;top:896.95px" width="14" height="14" viewBox="0 0 14 14"><circle cx="7" cy="7" r="7" fill="#62b37c"/><path d="M3.8 7.2 L6 9.4 L10.2 5" fill="none" stroke="#fff" stroke-width="1.7"/></svg>
<div class="r" style="left:936.50px;top:112.80px;width:303.10px;height:474.80px;background:#ffffff;"></div>
<div class="r" style="left:943.70px;top:120.00px;width:288.50px;height:41.8px;background:#f5f5f5;border:1px solid #eeeeee;box-sizing:border-box;border-radius:2px;"></div>
<div class="t" style="top:132.70px;font-size:13px;line-height:16px;color:#1e1e1e;-webkit-text-stroke:0.2px #1e1e1e;left:961.50px;">Volumes with most Disk Usage</div>
<div class="t" style="top:190.49px;font-size:11px;line-height:14px;color:#1a1a1a;font-weight:700;left:961.80px;">Device Name</div>
<div class="t" style="top:190.49px;font-size:11px;line-height:14px;color:#1a1a1a;font-weight:700;left:1076.10px;">Volume</div>
<div class="t" style="top:190.49px;font-size:11px;line-height:14px;color:#1a1a1a;font-weight:700;left:1146.50px;">Utilization(%)</div>
<div class="t" style="top:222.62px;font-size:11.5px;line-height:14px;color:#222;left:961.80px;">vCen</div>
<div class="r" style="left:987.30px;top:223.90px;width:58.50px;height:14.30px;background:#c4c4c4;"></div>
<div class="t" style="top:222.62px;font-size:11.5px;line-height:14px;color:#222;left:1076.10px;">C:\ Label...</div>
<div class="r" style="left:1145.80px;top:223.10px;width:42.53px;height:10.50px;background:#e8655d;"></div>
<div class="t" style="top:220.12px;font-size:11.5px;line-height:14px;color:#222;left:1215.63px;">96</div>
<div class="t" style="top:255.12px;font-size:11.5px;line-height:14px;color:#222;left:961.80px;">Opm</div>
<div class="r" style="left:987.30px;top:256.40px;width:57.70px;height:14.30px;background:#c4c4c4;"></div>
<div class="t" style="top:255.12px;font-size:11.5px;line-height:14px;color:#222;left:1076.10px;">C:</div>
<div class="r" style="left:1145.80px;top:255.60px;width:42.09px;height:10.50px;background:#e8655d;"></div>
<div class="t" style="top:252.62px;font-size:11.5px;line-height:14px;color:#222;left:1215.18px;">95</div>
<div class="t" style="top:287.62px;font-size:11.5px;line-height:14px;color:#222;left:961.80px;">Opm</div>
<div class="r" style="left:987.30px;top:288.90px;width:57.70px;height:14.30px;background:#c4c4c4;"></div>
<div class="t" style="top:287.62px;font-size:11.5px;line-height:14px;color:#222;left:1076.10px;">D:</div>
<div class="r" style="left:1145.80px;top:288.10px;width:31.90px;height:10.50px;background:#e6dc6e;"></div>
<div class="t" style="top:285.12px;font-size:11.5px;line-height:14px;color:#222;left:1205.00px;">72</div>
<div class="t" style="top:320.12px;font-size:11.5px;line-height:14px;color:#222;left:961.80px;">HP P</div>
<div class="r" style="left:988.00px;top:321.40px;width:55.80px;height:14.30px;background:#c4c4c4;"></div>
<div class="t" style="top:320.12px;font-size:11.5px;line-height:14px;color:#222;left:1076.10px;">C:</div>
<div class="r" style="left:1145.80px;top:320.60px;width:23.04px;height:10.50px;background:#67b680;"></div>
<div class="t" style="top:317.62px;font-size:11.5px;line-height:14px;color:#222;left:1196.14px;">52</div>
<div class="t" style="top:352.62px;font-size:11.5px;line-height:14px;color:#222;left:961.80px;">opm-</div>
<div class="r" style="left:988.00px;top:353.90px;width:54.90px;height:14.30px;background:#c4c4c4;"></div>
<div class="t" style="top:352.62px;font-size:11.5px;line-height:14px;color:#222;left:1076.10px;">C:</div>
<div class="r" style="left:1145.80px;top:353.10px;width:21.26px;height:10.50px;background:#67b680;"></div>
<div class="t" style="top:350.12px;font-size:11.5px;line-height:14px;color:#222;left:1194.36px;">48</div>
<div class="t" style="top:385.12px;font-size:11.5px;line-height:14px;color:#222;left:961.80px;">vijay-</div>
<div class="r" style="left:988.70px;top:386.40px;width:53.20px;height:14.30px;background:#c4c4c4;"></div>
<div class="t" style="top:385.12px;font-size:11.5px;line-height:14px;color:#222;left:1076.10px;">C:</div>
<div class="r" style="left:1145.80px;top:385.60px;width:19.05px;height:10.50px;background:#67b680;"></div>
<div class="t" style="top:382.62px;font-size:11.5px;line-height:14px;color:#222;left:1192.15px;">43</div>
<div class="t" style="top:417.62px;font-size:11.5px;line-height:14px;color:#222;left:961.80px;">OPM</div>
<div class="r" style="left:988.50px;top:418.90px;width:53.50px;height:14.30px;background:#c4c4c4;"></div>
<div class="t" style="top:417.62px;font-size:11.5px;line-height:14px;color:#222;left:1076.10px;">C:\ Label...</div>
<div class="r" style="left:1145.80px;top:418.10px;width:18.61px;height:10.50px;background:#67b680;"></div>
<div class="t" style="top:415.12px;font-size:11.5px;line-height:14px;color:#222;left:1191.71px;">42</div>
<div class="t" style="top:450.12px;font-size:11.5px;line-height:14px;color:#222;left:961.80px;">OPM</div>
<div class="r" style="left:988.50px;top:451.40px;width:53.80px;height:14.30px;background:#c4c4c4;"></div>
<div class="t" style="top:450.12px;font-size:11.5px;line-height:14px;color:#222;left:1076.10px;">C:</div>
<div class="r" style="left:1145.80px;top:450.60px;width:16.83px;height:10.50px;background:#67b680;"></div>
<div class="t" style="top:447.62px;font-size:11.5px;line-height:14px;color:#222;left:1189.93px;">38</div>
<div class="t" style="top:482.62px;font-size:11.5px;line-height:14px;color:#222;left:961.80px;">OPM</div>
<div class="r" style="left:988.50px;top:483.90px;width:53.80px;height:14.30px;background:#c4c4c4;"></div>
<div class="t" style="top:482.62px;font-size:11.5px;line-height:14px;color:#222;left:1076.10px;">C:\ Label...</div>
<div class="r" style="left:1145.80px;top:483.10px;width:16.39px;height:10.50px;background:#67b680;"></div>
<div class="t" style="top:480.12px;font-size:11.5px;line-height:14px;color:#222;left:1189.49px;">37</div>
<div class="t" style="top:515.12px;font-size:11.5px;line-height:14px;color:#222;left:961.80px;">opm-</div>
<div class="r" style="left:987.50px;top:516.40px;width:56.30px;height:14.30px;background:#c4c4c4;"></div>
<div class="t" style="top:515.12px;font-size:11.5px;line-height:14px;color:#222;left:1076.10px;">D:</div>
<div class="r" style="left:1145.80px;top:515.60px;width:15.51px;height:10.50px;background:#67b680;"></div>
<div class="t" style="top:512.62px;font-size:11.5px;line-height:14px;color:#222;left:1188.61px;">35</div>
<div class="r" style="left:936.50px;top:595.30px;width:303.10px;height:310.70px;background:#ffffff;"></div>
<div class="r" style="left:943.70px;top:602.50px;width:288.50px;height:41.8px;background:#f5f5f5;border:1px solid #eeeeee;box-sizing:border-box;border-radius:2px;"></div>
<div class="t" style="top:615.20px;font-size:13px;line-height:16px;color:#1e1e1e;-webkit-text-stroke:0.2px #1e1e1e;left:961.50px;">Devices by CPU Utilization</div>
<div class="t" style="top:673.99px;font-size:11px;line-height:14px;color:#1a1a1a;font-weight:700;left:961.90px;">Device Name</div>
<div class="t" style="top:673.99px;font-size:11px;line-height:14px;color:#1a1a1a;font-weight:700;left:1076.30px;">Min</div>
<div class="t" style="top:673.99px;font-size:11px;line-height:14px;color:#1a1a1a;font-weight:700;left:1118.50px;">...</div>
<div class="t" style="top:673.99px;font-size:11px;line-height:14px;color:#1a1a1a;font-weight:700;left:1146.20px;">Avg</div>
<div class="t" style="top:706.32px;font-size:11.5px;line-height:14px;color:#222;left:961.90px;">OPMc</div>
<div class="r" style="left:989.90px;top:708.00px;width:53.10px;height:13.50px;background:#c4c4c4;"></div>
<div class="t" style="top:706.32px;font-size:11.5px;line-height:14px;color:#222;left:1076.30px;">97</div>
<div class="t" style="top:706.49px;font-size:11px;line-height:14px;color:#222;left:1118.50px;">...</div>
<div class="r" style="left:1146.20px;top:706.50px;width:43.07px;height:10.80px;background:#e8655d;"></div>
<div class="t" style="top:703.42px;font-size:11.5px;line-height:14px;color:#222;left:1216.87px;">99</div>
<div class="t" style="top:738.72px;font-size:11.5px;line-height:14px;color:#222;left:961.90px;">HP Pr</div>
<div class="r" style="left:990.70px;top:740.40px;width:52.30px;height:13.50px;background:#c4c4c4;"></div>
<div class="t" style="top:738.72px;font-size:11.5px;line-height:14px;color:#222;left:1076.30px;">35</div>
<div class="t" style="top:738.89px;font-size:11px;line-height:14px;color:#222;left:1118.50px;">...</div>
<div class="r" style="left:1146.20px;top:738.90px;width:24.80px;height:10.80px;background:#67b680;"></div>
<div class="t" style="top:735.82px;font-size:11.5px;line-height:14px;color:#222;left:1198.60px;">57</div>
<div class="t" style="top:771.12px;font-size:11.5px;line-height:14px;color:#222;left:961.90px;">k16-D</div>
<div class="r" style="left:990.10px;top:772.80px;width:51.50px;height:13.50px;background:#c4c4c4;"></div>
<div class="t" style="top:771.12px;font-size:11.5px;line-height:14px;color:#222;left:1076.30px;">11</div>
<div class="t" style="top:771.29px;font-size:11px;line-height:14px;color:#222;left:1118.50px;">...</div>
<div class="r" style="left:1146.20px;top:771.30px;width:21.32px;height:10.80px;background:#67b680;"></div>
<div class="t" style="top:768.22px;font-size:11.5px;line-height:14px;color:#222;left:1195.12px;">49</div>
<div class="t" style="top:803.52px;font-size:11.5px;line-height:14px;color:#222;left:961.90px;">OPM-</div>
<div class="r" style="left:990.70px;top:805.20px;width:50.30px;height:13.50px;background:#c4c4c4;"></div>
<div class="t" style="top:803.52px;font-size:11.5px;line-height:14px;color:#222;left:1076.30px;">30</div>
<div class="t" style="top:803.69px;font-size:11px;line-height:14px;color:#222;left:1118.50px;">...</div>
<div class="r" style="left:1146.20px;top:803.70px;width:16.96px;height:10.80px;background:#67b680;"></div>
<div class="t" style="top:800.62px;font-size:11.5px;line-height:14px;color:#222;left:1190.76px;">39</div>
<div class="t" style="top:835.92px;font-size:11.5px;line-height:14px;color:#222;left:961.90px;">HP D</div>
<div class="r" style="left:988.70px;top:837.60px;width:52.30px;height:13.50px;background:#c4c4c4;"></div>
<div class="t" style="top:835.92px;font-size:11.5px;line-height:14px;color:#222;left:1076.30px;">4</div>
<div class="t" style="top:836.09px;font-size:11px;line-height:14px;color:#222;left:1118.50px;">...</div>
<div class="r" style="left:1146.20px;top:836.10px;width:12.62px;height:10.80px;background:#67b680;"></div>
<div class="t" style="top:833.02px;font-size:11.5px;line-height:14px;color:#222;left:1186.41px;">29</div>
<div class="t" style="top:868.32px;font-size:11.5px;line-height:14px;color:#222;left:961.90px;">opm-</div>
<div class="r" style="left:987.30px;top:870.00px;width:52.90px;height:13.50px;background:#c4c4c4;"></div>
<div class="t" style="top:868.32px;font-size:11.5px;line-height:14px;color:#222;left:1076.30px;">1</div>
<div class="t" style="top:868.49px;font-size:11px;line-height:14px;color:#222;left:1118.50px;">...</div>
<div class="r" style="left:1146.20px;top:868.50px;width:12.18px;height:10.80px;background:#67b680;"></div>
<div class="t" style="top:865.42px;font-size:11.5px;line-height:14px;color:#222;left:1185.98px;">28</div>
<div class="t" style="top:900.72px;font-size:11.5px;line-height:14px;color:#222;left:961.90px;">OPM</div>
<div class="r" style="left:988.00px;top:902.40px;width:53.00px;height:13.50px;background:#c4c4c4;"></div>
<div class="t" style="top:900.72px;font-size:11.5px;line-height:14px;color:#222;left:1076.30px;">4</div>
<div class="t" style="top:900.89px;font-size:11px;line-height:14px;color:#222;left:1118.50px;">...</div>
<div class="r" style="left:1146.20px;top:900.90px;width:7.83px;height:10.80px;background:#67b680;"></div>
<div class="t" style="top:897.82px;font-size:11.5px;line-height:14px;color:#222;left:1181.63px;">18</div>
<div class="r" style="left:1247.00px;top:112.80px;width:302.80px;height:793.20px;background:#ffffff;"></div>
<div class="r" style="left:1254.20px;top:120.00px;width:288.20px;height:41.8px;background:#f5f5f5;border:1px solid #eeeeee;box-sizing:border-box;border-radius:2px;"></div>
<div class="t" style="top:132.70px;font-size:13px;line-height:16px;color:#1e1e1e;-webkit-text-stroke:0.2px #1e1e1e;left:1272.00px;">Recent Alarms</div>
<svg style="left:0;top:0" width="1557" height="906"><path d="M1334.34 378.82 A101.5 101.5 0 1 1 1398.90 402.00 L1398.90 374.30 A73.8 73.8 0 1 0 1351.96 357.45 Z" fill="#e8655d" stroke="#fff" stroke-width="0.8"/><path d="M1398.90 402.00 A101.5 101.5 0 0 1 1334.34 378.82 L1351.96 357.45 A73.8 73.8 0 0 0 1398.90 374.30 Z" fill="#e6dc6e" stroke="#fff" stroke-width="0.8"/></svg>
<svg style="left:1370px;top:240px" width="60" height="50" viewBox="0 0 60 50">
<path d="M28.9 9.3 V13.8" stroke="#111" stroke-width="2"/>
<path d="M21.4 30.9 V22.5 C21.4 17.2 24.6 14.3 28.9 14.3 C33.2 14.3 36.5 17.2 36.5 22.5 V30.9 L39.5 36.6 H18.4 Z" fill="none" stroke="#111" stroke-width="2" stroke-linejoin="miter"/>
<path d="M26.4 38.2 A2.5 2.6 0 0 0 31.4 38.2 Z" fill="#111"/>
<path d="M14.2 8.3 L18.9 12.2 M9.3 17.1 L15.3 18.9 M9.3 27.5 L15.1 25.9 M43.4 8.1 L38.8 12.2 M48.4 16.9 L42.6 18.9 M48.4 27.7 L42.6 25.9" stroke="#111" stroke-width="2" stroke-linecap="round"/>
</svg>
<div class="t" style="top:283.50px;font-size:28px;line-height:35px;color:#111;left:1398.90px;transform:translateX(-50%);">10</div>
<div class="t" style="top:317.50px;font-size:15px;line-height:19px;color:#222;left:1398.90px;transform:translateX(-50%);">Alarm</div>
<div class="r" style="left:1256.30px;top:448.00px;width:283.50px;height:29.90px;background:#f9f9f9;border-bottom:1px solid #e4e4e4;box-sizing:border-box;"></div>
<div class="t" style="top:456.02px;font-size:11.5px;line-height:14px;color:#3a3a3a;left:1261.60px;">Device Name</div>
<svg style="left:1332px;top:460.5px" width="6" height="8" viewBox="0 0 6 8"><path d="M0.5 3.5 L3 0.8 L5.5 3.5 Z" fill="#cfcfcf"/><path d="M0.5 4.5 L3 7.2 L5.5 4.5 Z" fill="#e6e6e6"/></svg>
<div class="r" style="left:1264.20px;top:486.70px;width:2.00px;height:48.00px;background:#e8655d;"></div>
<div class="t" style="top:488.73px;font-size:10.3px;line-height:13px;color:#111;word-spacing:-0.8px;-webkit-text-stroke:0.3px #111;left:1272.20px;letter-spacing:0.129px;">ID=2004 Source=Microsoft-Windows-Resource-Exha...</div>
<div class="t" style="top:503.79px;font-size:11px;line-height:14px;color:#7a7a7a;word-spacing:-0.8px;left:1272.20px;">Opm</div>
<div class="r" style="left:1295.50px;top:506.20px;width:66.20px;height:10.30px;background:#c4c4c4;"></div>
<div class="t" style="top:519.79px;font-size:11px;line-height:14px;color:#5e5e5e;word-spacing:-0.8px;left:1272.20px;letter-spacing:-0.255px;">21 Feb 2019 04:57:02 PM IST</div>
<div class="r" style="left:1256.30px;top:543.20px;width:283.50px;height:1.00px;background:#e9e9e9;"></div>
<div class="r" style="left:1264.20px;top:552.50px;width:2.00px;height:48.00px;background:#e8655d;"></div>
<div class="t" style="top:554.53px;font-size:10.3px;line-height:13px;color:#111;word-spacing:-0.8px;-webkit-text-stroke:0.3px #111;left:1272.20px;letter-spacing:0.214px;">ID=4625 Source=Microsoft-Windows-Security-Auditi...</div>
<div class="t" style="top:569.59px;font-size:11px;line-height:14px;color:#7a7a7a;word-spacing:-0.8px;left:1272.20px;">Opm</div>
<div class="r" style="left:1295.50px;top:572.00px;width:70.20px;height:10.30px;background:#c4c4c4;"></div>
<div class="t" style="top:585.59px;font-size:11px;line-height:14px;color:#5e5e5e;word-spacing:-0.8px;left:1272.20px;letter-spacing:-0.255px;">21 Feb 2019 04:56:34 PM IST</div>
<div class="r" style="left:1256.30px;top:609.00px;width:283.50px;height:1.00px;background:#e9e9e9;"></div>
<div class="r" style="left:1264.20px;top:618.30px;width:2.00px;height:48.00px;background:#e8655d;"></div>
<div class="t" style="top:620.33px;font-size:10.3px;line-height:13px;color:#111;word-spacing:-0.8px;-webkit-text-stroke:0.3px #111;left:1272.20px;letter-spacing:0.179px;">ID=1014 Source=Microsoft-Windows-DNS-Client Typ...</div>
<div class="t" style="top:635.39px;font-size:11px;line-height:14px;color:#7a7a7a;word-spacing:-0.8px;left:1272.20px;">Opm</div>
<div class="r" style="left:1295.50px;top:637.80px;width:68.50px;height:10.30px;background:#c4c4c4;"></div>
<div class="t" style="top:651.39px;font-size:11px;line-height:14px;color:#5e5e5e;word-spacing:-0.8px;left:1272.20px;letter-spacing:-0.255px;">21 Feb 2019 04:55:58 PM IST</div>
<div class="r" style="left:1256.30px;top:674.80px;width:283.50px;height:1.00px;background:#e9e9e9;"></div>
<div class="r" style="left:1264.20px;top:684.10px;width:2.00px;height:48.00px;background:#e8655d;"></div>
<div class="t" style="top:686.13px;font-size:10.3px;line-height:13px;color:#111;word-spacing:-0.8px;-webkit-text-stroke:0.3px #111;left:1272.20px;letter-spacing:0.025px;">ID=6002 Source=MSExchange Mid-Tier Storage Type=...</div>
<div class="t" style="top:701.19px;font-size:11px;line-height:14px;color:#7a7a7a;word-spacing:-0.8px;left:1272.20px;">Opm</div>
<div class="r" style="left:1295.50px;top:703.60px;width:69.20px;height:10.30px;background:#c4c4c4;"></div>
<div class="t" style="top:717.19px;font-size:11px;line-height:14px;color:#5e5e5e;word-spacing:-0.8px;left:1272.20px;letter-spacing:-0.255px;">21 Feb 2019 04:52:49 PM IST</div>
<div class="r" style="left:1256.30px;top:740.60px;width:283.50px;height:1.00px;background:#e9e9e9;"></div>
<div class="r" style="left:1264.20px;top:749.90px;width:2.00px;height:48.00px;background:#e8dc6a;"></div>
<div class="t" style="top:751.93px;font-size:10.3px;line-height:13px;color:#111;word-spacing:-0.8px;-webkit-text-stroke:0.3px #111;left:1272.20px;letter-spacing:-0.012px;">ID=700 Source=NTDS ISAM Type=3 Message=NTDS (...</div>
<div class="t" style="top:766.99px;font-size:11px;line-height:14px;color:#7a7a7a;word-spacing:-0.8px;left:1272.20px;">Opm</div>
<div class="r" style="left:1295.50px;top:769.40px;width:71.30px;height:10.30px;background:#c4c4c4;"></div>
<div class="t" style="top:782.99px;font-size:11px;line-height:14px;color:#5e5e5e;word-spacing:-0.8px;left:1272.20px;letter-spacing:-0.255px;">21 Feb 2019 04:43:34 PM IST</div>
<div class="r" style="left:1256.30px;top:806.40px;width:283.50px;height:1.00px;background:#e9e9e9;"></div>
<div class="r" style="left:1264.20px;top:815.70px;width:2.00px;height:48.00px;background:#e8655d;"></div>
<div class="t" style="top:817.73px;font-size:10.3px;line-height:13px;color:#111;word-spacing:-0.8px;-webkit-text-stroke:0.3px #111;left:1272.20px;letter-spacing:0.087px;">APM Plugin: Health is critical as the resource is not ava...</div>
<div class="t" style="top:832.79px;font-size:11px;line-height:14px;color:#7a7a7a;word-spacing:-0.8px;left:1272.20px;">HP D</div>
<div class="r" style="left:1295.50px;top:835.20px;width:73.40px;height:10.30px;background:#c4c4c4;"></div>
<div class="t" style="top:848.79px;font-size:11px;line-height:14px;color:#5e5e5e;word-spacing:-0.8px;left:1272.20px;letter-spacing:-0.225px;">21 Feb 2019 04:35:11 PM IST</div>
<div class="r" style="left:1256.30px;top:872.20px;width:283.50px;height:1.00px;background:#e9e9e9;"></div>
<div class="r" style="left:1264.20px;top:881.50px;width:2.00px;height:48.00px;background:#e8655d;"></div>
<div class="t" style="top:883.53px;font-size:10.3px;line-height:13px;color:#111;word-spacing:-0.8px;-webkit-text-stroke:0.3px #111;left:1272.20px;letter-spacing:-0.060px;">ID=1010 Source=MSExchangeFastSearch Type=2 Mess...</div>
<div class="t" style="top:898.59px;font-size:11px;line-height:14px;color:#7a7a7a;word-spacing:-0.8px;left:1272.20px;">Opm</div>
<div class="r" style="left:1295.50px;top:901.00px;width:70.50px;height:10.30px;background:#c4c4c4;"></div>
<div class="t" style="top:914.59px;font-size:11px;line-height:14px;color:#5e5e5e;word-spacing:-0.8px;left:1272.20px;letter-spacing:-0.225px;">21 Feb 2019 04:30:11 PM IST</div>
<div class="r" style="left:1436.10px;top:873.20px;width:44.60px;height:32.80px;background:#262626;border-top:4px solid #000;box-sizing:border-box;"></div>
<div class="t" style="top:878.41px;font-size:17px;line-height:21px;color:#8c8c8c;font-weight:700;left:1458.40px;transform:translateX(-50%);">286</div>
<div class="t" style="top:896.19px;font-size:11px;line-height:14px;color:#8c8c8c;left:1458.40px;transform:translateX(-50%);">Alarms</div>
<div class="r" style="left:1497.20px;top:873.20px;width:44.70px;height:32.80px;background:#62b17c;"></div>
<svg style="left:1506px;top:881px" width="28" height="25" viewBox="0 0 28 25">
<path d="M7 2 H21 C22.5 2 23.5 3 23.5 4.5 V10.5 C23.5 12 22.5 13 21 13 H20" fill="none" stroke="#b9f0c8" stroke-width="1.2"/>
<path d="M3 7 H17 C18.5 7 19.5 8 19.5 9.5 V15.5 C19.5 17 18.5 18 17 18 H9 L6 21.5 V18 H3 C1.5 18 0.5 17 0.5 15.5 V9.5 C0.5 8 1.5 7 3 7 Z" fill="#62b17c" stroke="#b9f0c8" stroke-width="1.2"/>
<path d="M4.5 10.5 H8 M4.5 12.5 H15.5 M4.5 14.5 H15.5" stroke="#b9f0c8" stroke-width="1.2"/>
</svg>
</body></html>
